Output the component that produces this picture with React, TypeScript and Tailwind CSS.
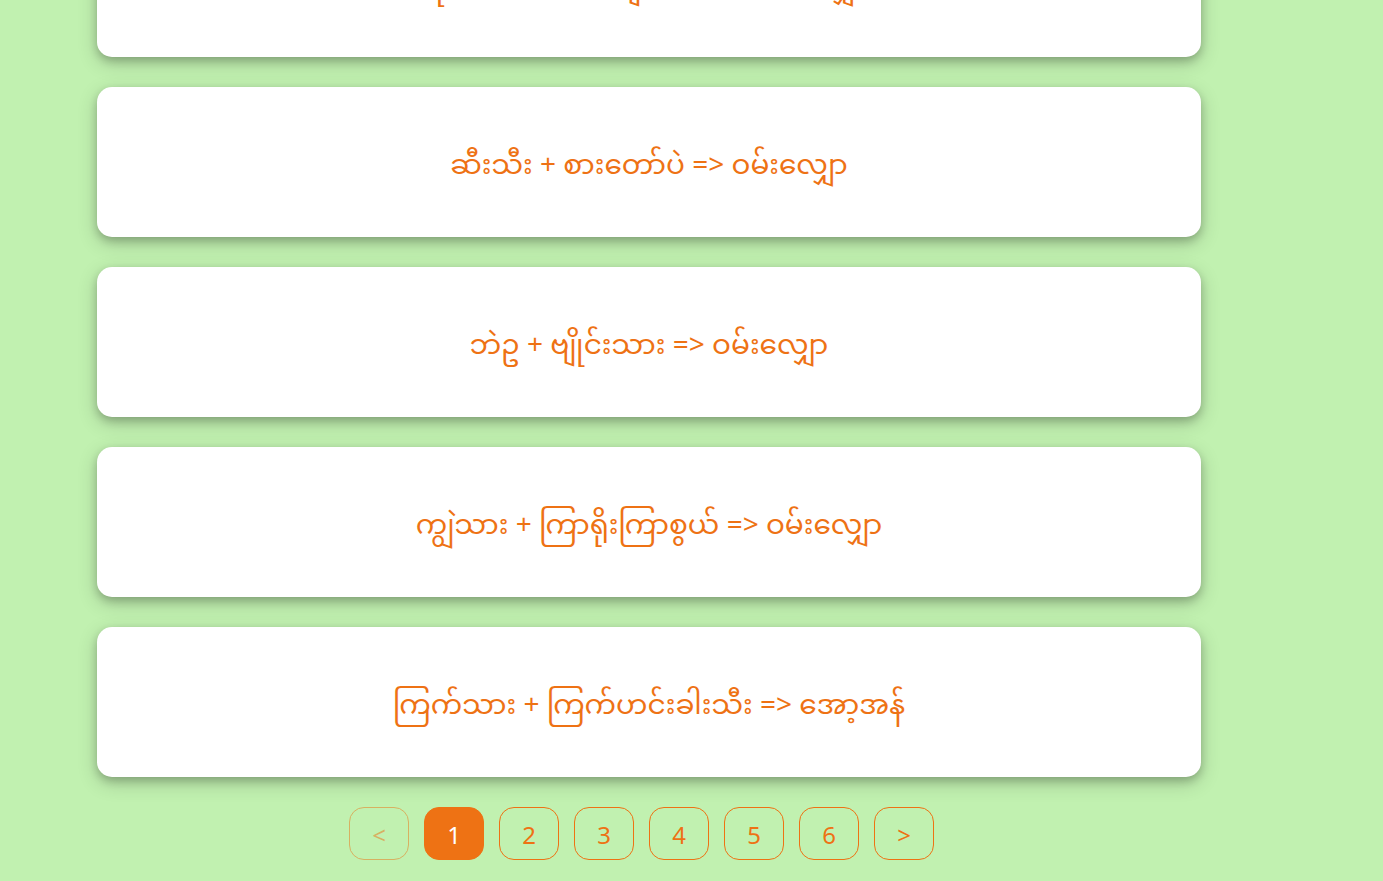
const combinations = [
  "ပုလဲသား + သစ်ချားသီး => ဝမ်းလျှော",
  "ဆီးသီး + စားတော်ပဲ => ဝမ်းလျှော",
  "ဘဲဥ + ဗျိုင်းသား => ဝမ်းလျှော",
  "ကျွဲသား + ကြာရိုးကြာစွယ် => ဝမ်းလျှော",
  "ကြက်သား + ကြက်ဟင်းခါးသီး => အော့အန်",
];

const pages = ["1", "2", "3", "4", "5", "6"];
const currentPage = "1";

const pageButton =
  "h-[53px] w-[60px] rounded-[15px] border border-[#ee7214] pt-0.5 text-2xl leading-8 disabled:opacity-50";

export default function App() {
  return (
    <div className="h-screen overflow-hidden bg-[#c1f1b0] font-['Noto_Sans','Noto_Sans_Myanmar',sans-serif] text-[#ee7214]">
      <main className="-mt-[93px] pr-[182px] pl-[97px]">
        <ul className="flex flex-col gap-[30px]">
          {combinations.map((text) => (
            <li
              key={text}
              className="flex h-[150px] items-center justify-center rounded-[15px] bg-white pt-0.5 text-[28px] shadow-[0_4px_8px_rgba(0,0,0,0.2),0_6px_20px_rgba(0,0,0,0.19)]"
            >
              <p lang="my">{text}</p>
            </li>
          ))}
        </ul>
        <nav aria-label="Pagination" className="mt-[30px] flex justify-center gap-[15px] pr-[15px]">
          <button type="button" aria-label="Previous page" disabled className={pageButton}>
            &lt;
          </button>
          {pages.map((page) => (
            <button
              type="button"
              key={page}
              aria-current={page === currentPage ? "page" : undefined}
              className={`${pageButton} ${page === currentPage ? "bg-[#ee7214] text-white" : ""}`}
            >
              {page}
            </button>
          ))}
          <button type="button" aria-label="Next page" className={pageButton}>
            &gt;
          </button>
        </nav>
      </main>
    </div>
  );
}
